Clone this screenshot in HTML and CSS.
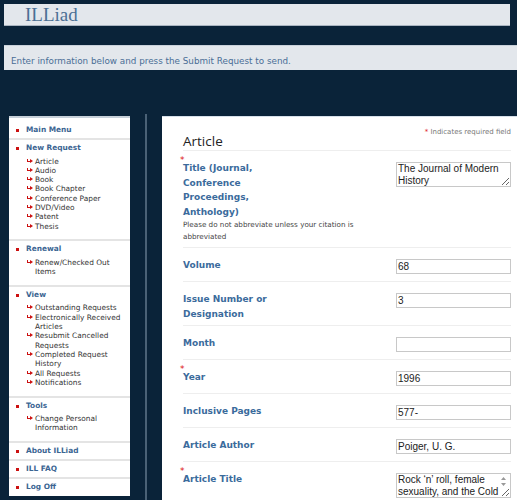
FILE: index.html
```html
<!DOCTYPE html>
<html>
<head>
<meta charset="utf-8">
<title>ILLiad</title>
<link rel="stylesheet" href="styles.css">
</head>
<body>
<div class="header"><span class="brand">ILLiad</span></div>
<div class="msgbar">Enter information below and press the Submit Request to send.</div>
<div class="main">
  <nav class="sidebar">
    <div class="sec"><div class="head">Main Menu</div></div>
    <div class="sec">
      <div class="head">New Request</div>
      <ul>
        <li>Article</li><li>Audio</li><li>Book</li><li>Book Chapter</li><li>Conference Paper</li><li>DVD/Video</li><li>Patent</li><li>Thesis</li>
      </ul>
    </div>
    <div class="sec">
      <div class="head">Renewal</div>
      <ul><li>Renew/Checked Out Items</li></ul>
    </div>
    <div class="sec">
      <div class="head">View</div>
      <ul>
        <li>Outstanding Requests</li><li>Electronically Received Articles</li><li>Resubmit Cancelled Requests</li><li>Completed Request History</li><li>All Requests</li><li>Notifications</li>
      </ul>
    </div>
    <div class="sec">
      <div class="head">Tools</div>
      <ul><li>Change Personal Information</li></ul>
    </div>
    <div class="sec"><div class="head">About ILLiad</div></div>
    <div class="sec"><div class="head">ILL FAQ</div></div>
    <div class="sec last"><div class="head">Log Off</div></div>
  </nav>
  <div class="vline"></div>
  <section class="content">
    <div class="formhead">
      <h1>Article</h1>
      <div class="note"><span class="req">*</span> Indicates required field</div>
    </div>
    <div class="row">
      <div class="lbl">
        <div class="name"><span class="ast">*</span>Title (Journal, Conference Proceedings, Anthology)</div>
        <div class="help">Please do not abbreviate unless your citation is abbreviated</div>
      </div>
      <textarea class="ta">The Journal of Modern History</textarea>
    </div>
    <div class="row">
      <div class="lbl"><div class="name">Volume</div></div>
      <input class="inp" value="68">
    </div>
    <div class="row">
      <div class="lbl"><div class="name">Issue Number or Designation</div></div>
      <input class="inp" value="3">
    </div>
    <div class="row">
      <div class="lbl"><div class="name">Month</div></div>
      <input class="inp" value="">
    </div>
    <div class="row">
      <div class="lbl"><div class="name"><span class="ast">*</span>Year</div></div>
      <input class="inp" value="1996">
    </div>
    <div class="row">
      <div class="lbl"><div class="name">Inclusive Pages</div></div>
      <input class="inp" value="577-">
    </div>
    <div class="row">
      <div class="lbl"><div class="name">Article Author</div></div>
      <input class="inp" value="Poiger, U. G.">
    </div>
    <div class="row">
      <div class="lbl"><div class="name"><span class="ast">*</span>Article Title</div></div>
      <div class="tawrap">
        <textarea class="ta spun">Rock ‘n’ roll, female sexuality, and the Cold War battle over German identities</textarea>
        <svg class="spin" width="7" height="11" viewBox="0 0 7 11"><path d="M3.5 1 L6 4 L1 4 Z M1 7 L6 7 L3.5 10 Z" fill="#999"/></svg>
      </div>
    </div>
  </section>
</div>
</body>
</html>
```
FILE: styles.css
```css
html, body {
  margin: 0;
  padding: 0;
}
body {
  background: #0a2339;
  height: 500px;
  overflow: hidden;
  font-family: "DejaVu Sans", Verdana, sans-serif;
}
.header {
  margin: 4px 7px 0 4px;
  height: 21px;
  background: #e3e7ec;
  border-bottom: 1px solid #a9b4c0;
  padding-left: 21px;
}
.brand {
  font-family: "Liberation Serif", "Times New Roman", serif;
  font-size: 19px;
  line-height: 22px;
  color: #4b6f94;
}
.msgbar {
  margin: 19px 0 0 4px;
  height: 25px;
  background: #e3e7ec;
  border-top: 1px solid #c9d1da;
  box-sizing: border-box;
  padding-left: 7px;
  font-size: 8.8px;
  line-height: 31px;
  color: #4a6e96;
}
.main {
  display: flex;
  align-items: flex-start;
  margin-top: 46px;
}
.sidebar {
  margin-left: 9px;
  width: 121px;
  background: #fff;
  border-top: 2px solid #c7d0d9;
  padding-top: 4px;
  flex: none;
}
.sec {
  border-bottom: 2px solid #e4e4e4;
  padding: 3px 0 3px;
}
.sec.last {
  border-bottom: none;
  padding-bottom: 4px;
}
.head {
  position: relative;
  padding-left: 17px;
  font-size: 7.4px;
  font-weight: bold;
  line-height: 10px;
  color: #3b6592;
}
.head::before {
  content: "";
  position: absolute;
  left: 7px;
  top: 4px;
  width: 3px;
  height: 3px;
  background: #cc1111;
}
.sec ul {
  list-style: none;
  margin: 3.5px 0 5.5px;
  padding: 0 0 0 26px;
}
.sec li {
  position: relative;
  font-size: 7.4px;
  line-height: 9.3px;
  color: #333;
}
.sec li::before {
  content: "";
  position: absolute;
  left: -8px;
  top: 2px;
  width: 4px;
  height: 3px;
  background:
    linear-gradient(#cc1111, #cc1111) 0 0 / 1px 3px no-repeat,
    linear-gradient(#cc1111, #cc1111) 0 2px / 4px 1px no-repeat;
}
.sec li::after {
  content: "";
  position: absolute;
  left: -5px;
  top: 2px;
  border-left: 3px solid #cc1111;
  border-top: 2px solid transparent;
  border-bottom: 2px solid transparent;
}
.vline {
  flex: none;
  width: 2px;
  background: #4a6176;
  margin: -2px 15px 0;
  height: 390px;
}
.content {
  flex: 1;
  background: #fff;
  border-top: 1px solid #d6e0ea;
  padding: 9px 6px 0 21px;
  height: 400px;
}
.formhead {
  display: flex;
  justify-content: space-between;
  align-items: flex-start;
  border-bottom: 1px solid #eeeeee;
}
.formhead h1 {
  margin: 6px 0 0;
  font-family: "Open Sans", sans-serif;
  font-weight: normal;
  font-size: 13.5px;
  line-height: 18px;
  color: #222;
}
.note {
  font-size: 7px;
  line-height: 10px;
  color: #777;
  margin-top: 1px;
}
.req {
  color: #d22;
}
.row {
  display: flex;
  justify-content: space-between;
  align-items: flex-start;
  border-bottom: 1px solid #eeeeee;
  padding: 10px 0 4px;
}
.lbl {
  width: 178px;
}
.name {
  position: relative;
  width: 100px;
  font-size: 9px;
  font-weight: bold;
  line-height: 14.5px;
  color: #3b6b9c;
}
.ast {
  position: absolute;
  left: -3px;
  top: -8px;
  font-size: 9px;
  color: #dd1111;
  font-weight: normal;
}
.help {
  font-size: 7.2px;
  line-height: 12px;
  color: #444;
  margin-top: 0;
}
.inp, .ta {
  flex: none;
  box-sizing: border-box;
  width: 115px;
  border: 1px solid #c8c8c8;
  margin: 0;
  padding: 0 1px;
  font-family: "Liberation Sans", Arial, sans-serif;
  font-size: 10px;
  color: #222;
  background: #fff;
}
.inp {
  height: 15px;
  margin-top: 1px;
  margin-bottom: 3px;
}
.ta {
  height: 25px;
  line-height: 12px;
  resize: vertical;
  overflow: hidden;
  display: block;
  margin-top: 1px;
}
.ta.spun {
  padding-right: 10px;
}
.tawrap {
  position: relative;
  flex: none;
}
.spin {
  position: absolute;
  right: 4px;
  top: 4px;
}
```
